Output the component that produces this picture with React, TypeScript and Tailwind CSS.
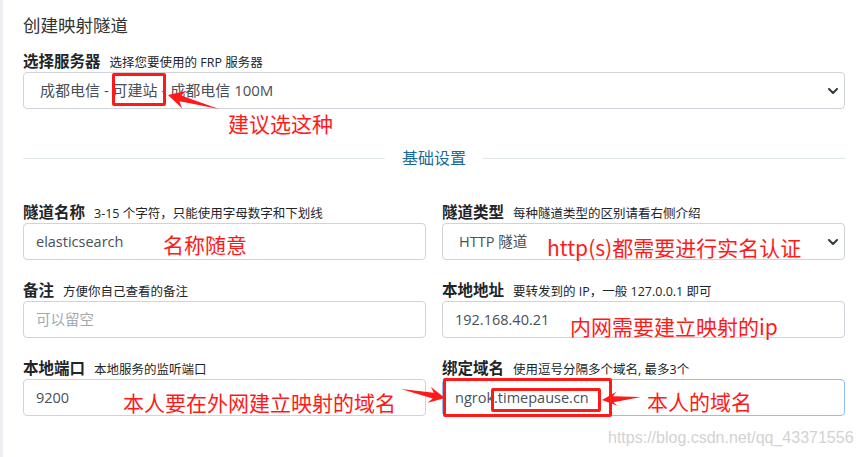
import React from 'react';

type Pt = [number, number];

// red annotation arrow: thin tail widening to a head
function arrowPoints(tail: Pt, tip: Pt, headLen: number, headW: number, neckW: number) {
  const dx = tip[0] - tail[0];
  const dy = tip[1] - tail[1];
  const len = Math.hypot(dx, dy);
  const ux = dx / len;
  const uy = dy / len;
  const nx = -uy;
  const ny = ux;
  const neck: Pt = [tip[0] - ux * headLen * 0.75, tip[1] - uy * headLen * 0.75];
  const base: Pt = [tip[0] - ux * headLen, tip[1] - uy * headLen];
  const pts: Pt[] = [
    tail,
    [neck[0] + nx * neckW, neck[1] + ny * neckW],
    [base[0] + nx * headW, base[1] + ny * headW],
    tip,
    [base[0] - nx * headW, base[1] - ny * headW],
    [neck[0] - nx * neckW, neck[1] - ny * neckW],
  ];
  return pts.map((p) => p.join(',')).join(' ');
}

function Chevron() {
  return (
    <svg width="10" height="6" viewBox="0 0 10 6" className="shrink-0">
      <path d="M1 1l4 4 4-4" fill="none" stroke="#343a40" strokeWidth="2" strokeLinecap="round" strokeLinejoin="round" />
    </svg>
  );
}

function Label({ title, hint }: { title: string; hint: string }) {
  return (
    <div className="h-[20px] mb-[1px] flex items-baseline">
      <span className="text-[15.5px] font-bold text-[#212529] leading-[20px]">{title}</span>
      <span className="ml-[9px] text-[12.5px] text-[#212529] leading-[20px]">{hint}</span>
    </div>
  );
}

function Field({
  title,
  hint,
  value,
  placeholder,
  select,
  focus,
}: {
  title: string;
  hint: string;
  value?: string;
  placeholder?: string;
  select?: boolean;
  focus?: boolean;
}) {
  return (
    <div>
      <Label title={title} hint={hint} />
      <div
        className={`h-[37px] rounded-[4px] border flex items-center justify-between text-[14.5px] ${
          focus ? 'border-[#8fbef8]' : 'border-[#ced4da]'
        } ${select ? 'pl-[16px] pr-[6px]' : 'pl-[12px]'}`}
      >
        {value ? (
          <span className="text-[#495057]">{value}</span>
        ) : (
          <span className="text-[#a3a9b0]">{placeholder}</span>
        )}
        {select && <Chevron />}
      </div>
    </div>
  );
}

const notes = [
  { text: '建议选这种', x: 228, y: 111 },
  { text: '名称随意', x: 163, y: 232 },
  { text: 'http(s)都需要进行实名认证', x: 547, y: 235 },
  { text: '内网需要建立映射的ip', x: 570, y: 314 },
  { text: '本人要在外网建立映射的域名', x: 123, y: 390 },
  { text: '本人的域名', x: 647, y: 389 },
];

export default function App() {
  return (
    <div className="relative flex w-[861px] h-[457px] overflow-hidden bg-white font-['Open_Sans','Noto_Sans_CJK_SC',sans-serif]">
      <div className="w-[3px] shrink-0 bg-[#eceef1]" />
      <div className="flex-1 pl-5 pr-4">
        <h1 className="pt-[13px] text-[17.5px] leading-[24px] text-[#333]">创建映射隧道</h1>

        <div className="mt-[14px]">
          <Label title="选择服务器" hint="选择您要使用的 FRP 服务器" />
          <div className="h-[37px] rounded-[4px] border border-[#ced4da] flex items-center justify-between pl-[16px] pr-[6px] text-[15px] text-[#495057]">
            <span>成都电信 - 可建站 - 成都电信 100M</span>
            <Chevron />
          </div>
        </div>

        <div className="mt-[39px] h-[20px] flex items-center">
          <div className="flex-1 h-px bg-[#e3eaed]" />
          <span className="px-[17px] text-[16px] text-[#1b6a9c]">基础设置</span>
          <div className="flex-1 h-px bg-[#e3eaed]" />
        </div>

        <div className="mt-[34px] grid grid-cols-2 gap-x-4 gap-y-5">
          <Field title="隧道名称" hint="3-15 个字符，只能使用字母数字和下划线" value="elasticsearch" />
          <Field title="隧道类型" hint="每种隧道类型的区别请看右侧介绍" value="HTTP 隧道" select />
          <Field title="备注" hint="方便你自己查看的备注" placeholder="可以留空" />
          <Field title="本地地址" hint="要转发到的 IP，一般 127.0.0.1 即可" value="192.168.40.21" />
          <Field title="本地端口" hint="本地服务的监听端口" value="9200" />
          <Field title="绑定域名" hint="使用逗号分隔多个域名, 最多3个" value="ngrok.timepause.cn" focus />
        </div>
      </div>

      {/* annotation layer */}
      <div className="absolute left-[112px] top-[73px] w-[54px] h-[33px] border-[3px] border-[#ff1a1a] rounded-[2px]" />
      <div className="absolute left-[443px] top-[378px] w-[169px] h-[39px] border-[3px] border-[#ff1a1a] rounded-[2px]" />
      <div className="absolute left-[491px] top-[388px] w-[110px] h-[24px] border-[3px] border-[#ff1a1a] rounded-[2px]" />

      <svg className="absolute left-0 top-0 pointer-events-none" width="861" height="457">
        <polygon points={arrowPoints([219, 109], [168, 95], 17, 9, 3)} fill="#ff1a1a" />
        <polygon points={arrowPoints([401, 389], [445, 398], 16, 8, 3)} fill="#ff1a1a" />
        <polygon points={arrowPoints([641, 397], [602, 400], 15, 7, 3)} fill="#ff1a1a" />
      </svg>

      {notes.map((n) => (
        <span
          key={n.text}
          className="absolute text-[21px] leading-[24px] text-[#ff1a1a] font-['Noto_Sans_CJK_SC',sans-serif] whitespace-nowrap"
          style={{ left: n.x, top: n.y }}
        >
          {n.text}
        </span>
      ))}

      <span className="absolute left-[608px] top-[428px] text-[16px] leading-[20px] text-[#d2d2d2] font-['Liberation_Sans',sans-serif]">
        https://blog.csdn.net/qq_43371556
      </span>
    </div>
  );
}
